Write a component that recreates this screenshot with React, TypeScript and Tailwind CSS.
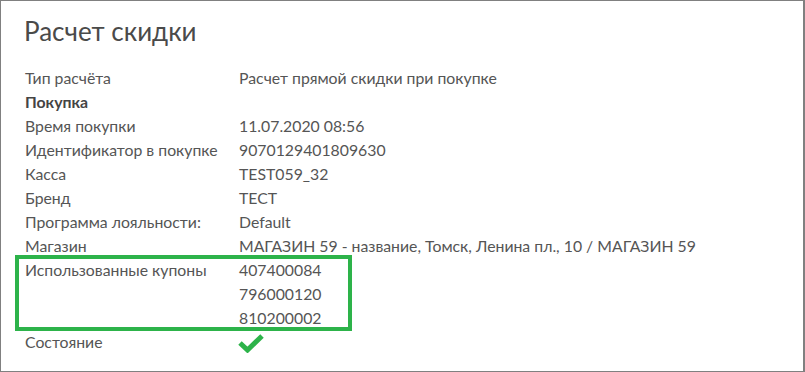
import React from 'react';

const rows: { label: string; values: string[]; bold?: boolean }[] = [
  { label: 'Тип расчёта', values: ['Расчет прямой скидки при покупке'] },
  { label: 'Покупка', values: [], bold: true },
  { label: 'Время покупки', values: ['11.07.2020 08:56'] },
  { label: 'Идентификатор в покупке', values: ['9070129401809630'] },
  { label: 'Касса', values: ['TEST059_32'] },
  { label: 'Бренд', values: ['ТЕСТ'] },
  { label: 'Программа лояльности:', values: ['Default'] },
  { label: 'Магазин', values: ['МАГАЗИН 59 - название, Томск, Ленина пл., 10 / МАГАЗИН 59'] },
];

const coupons = ['407400084', '796000120', '810200002'];

const Row = ({ label, values, bold }: { label: string; values: string[]; bold?: boolean }) => (
  <div className="flex h-6 items-center">
    <div className={`w-[214px] shrink-0 ${bold ? 'font-bold text-[#444]' : ''}`}>{label}</div>
    <div>{values[0]}</div>
  </div>
);

export default function App() {
  return (
    <div
      className="w-[805px] h-[372px] bg-white border border-[#808080] border-r-2 text-[15.8px] text-[#555] leading-6"
      style={{ fontFamily: '"Lato", "Liberation Sans", sans-serif' }}
    >
      <h1 className="pl-[23px] pt-[13px] text-[26px] leading-[34px] text-[#4a4a4a]">Расчет скидки</h1>
      <div className="mt-[18px] pl-[24px]">
        {rows.map((r) => (
          <Row key={r.label} {...r} />
        ))}
        <div className="relative">
          <div className="absolute left-[-10px] top-[-3px] w-[337px] h-[76px] border-4 border-[#2db34a]" />
          {coupons.map((c, i) => (
            <div key={c} className="flex h-6 items-center">
              <div className="w-[214px] shrink-0">{i === 0 ? 'Использованные купоны' : ''}</div>
              <div>{c}</div>
            </div>
          ))}
        </div>
        <div className="flex h-6 items-center">
          <div className="w-[214px] shrink-0">Состояние</div>
          <svg width="26" height="20" viewBox="0 0 26 20" className="mt-[2px] -ml-[1px]">
            <path d="M2 10 L9.5 17 L24 3" fill="none" stroke="#2db34a" strokeWidth="5" />
          </svg>
        </div>
      </div>
    </div>
  );
}
